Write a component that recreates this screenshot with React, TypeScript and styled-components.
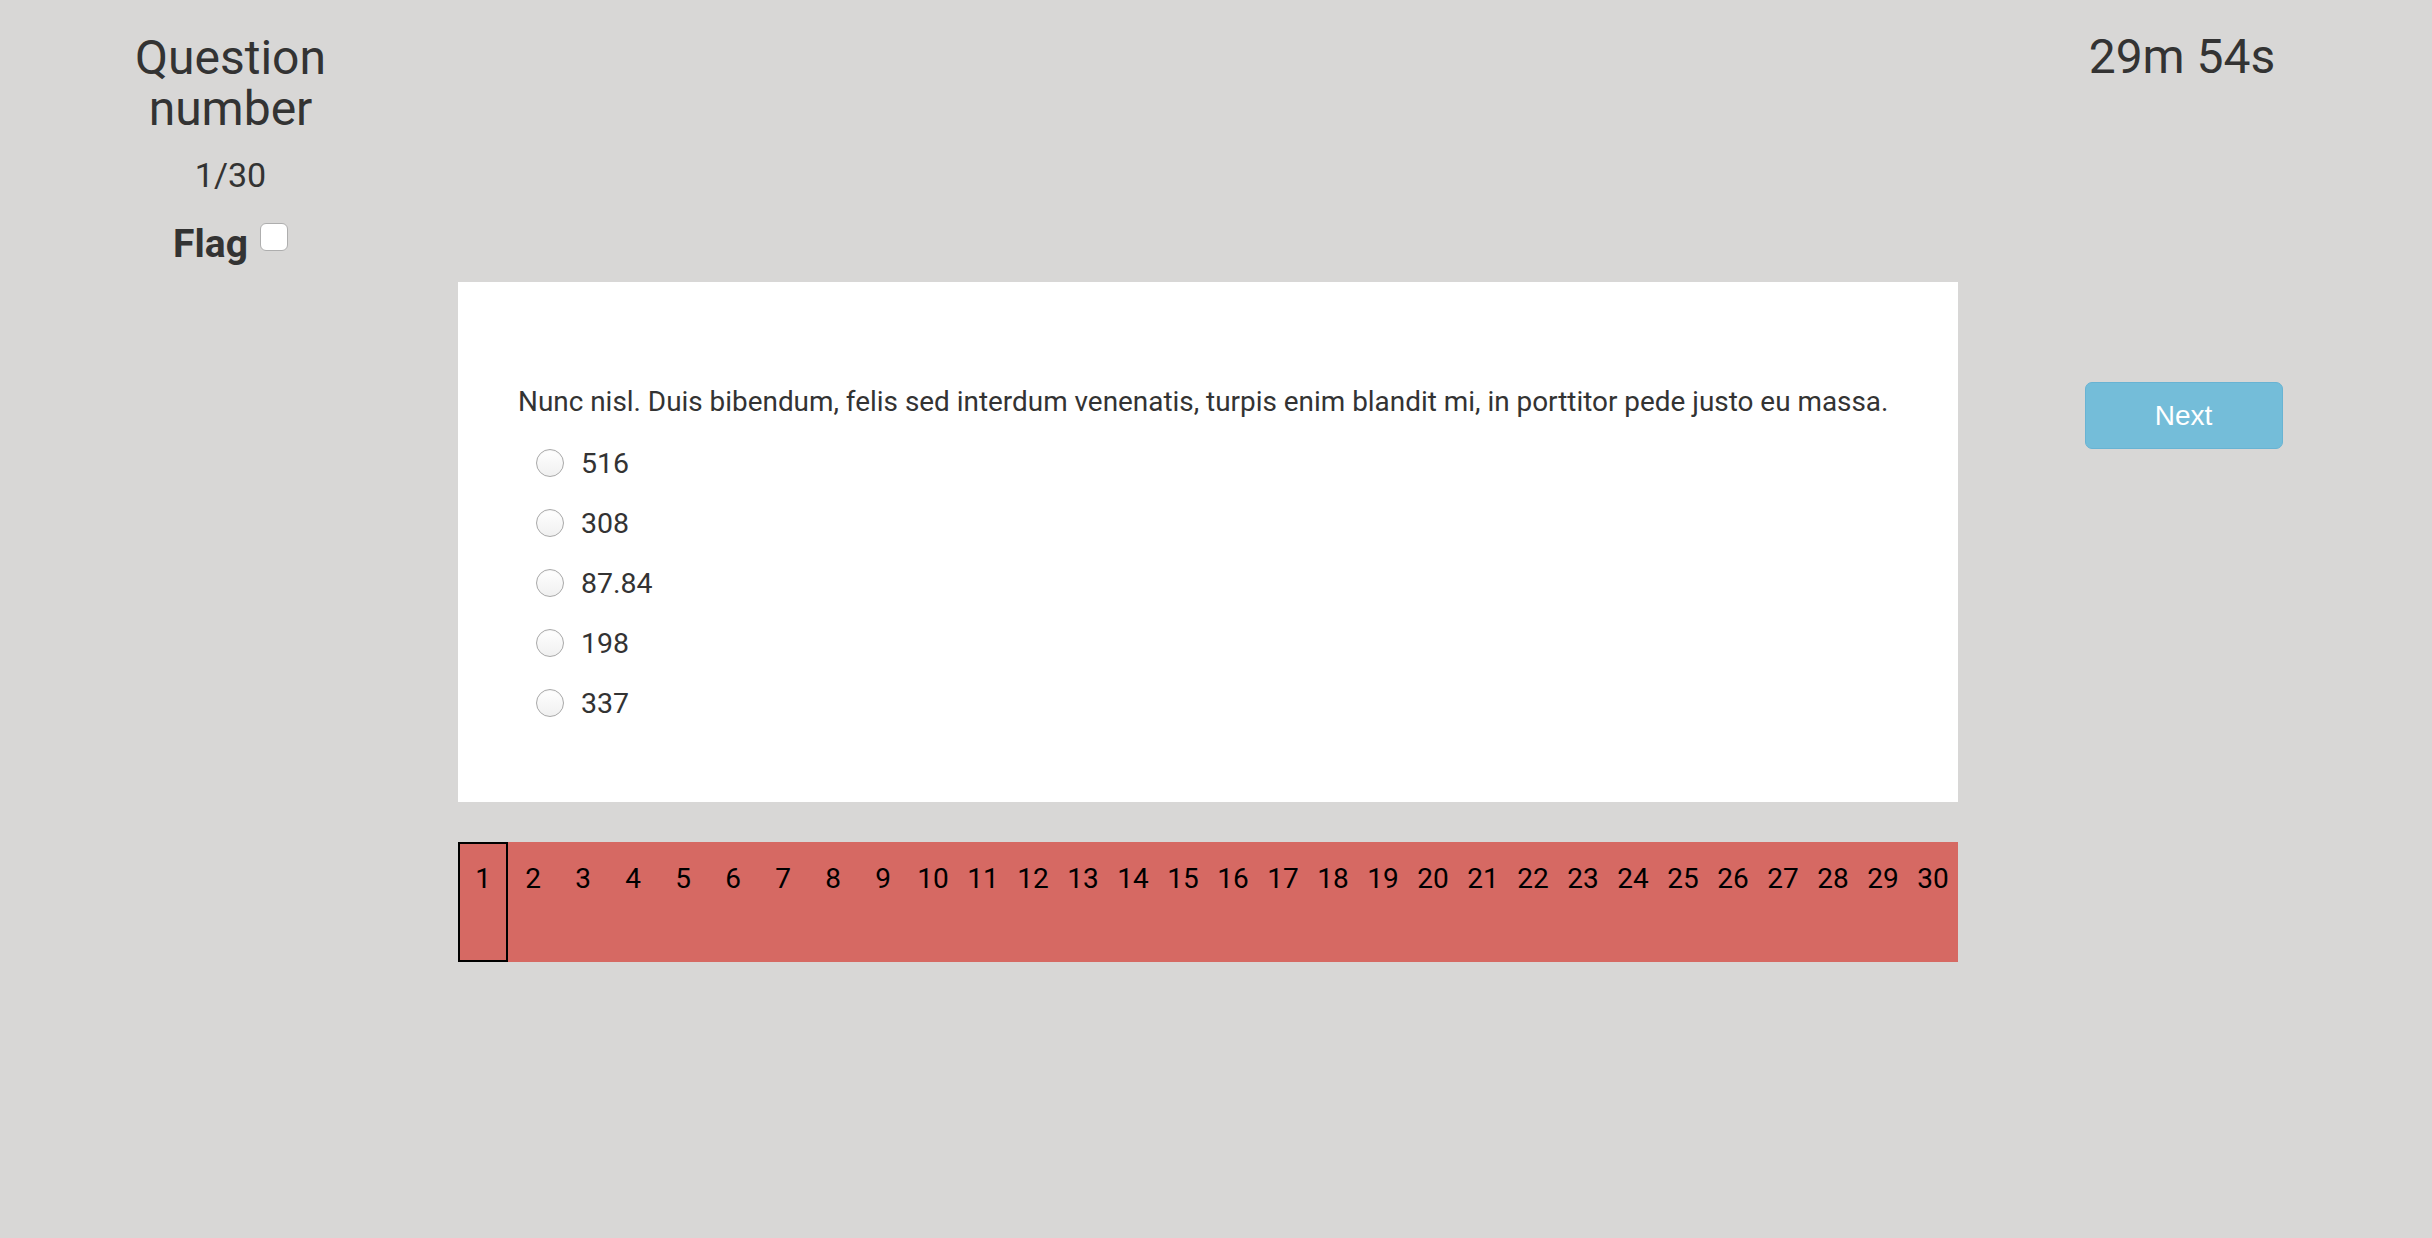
import React from "react";
import styled, { createGlobalStyle } from "styled-components";

const GlobalStyle = createGlobalStyle`
  html, body {
    margin: 0;
    padding: 0;
    background: #d8d7d6;
    font-family: Roboto, "Liberation Sans", sans-serif;
    color: #333333;
  }
  * { box-sizing: border-box; }
`;

const Page = styled.div`
  display: grid;
  grid-template-columns: 458px 1500px 448px;
  grid-template-rows: 282px auto auto;
  align-content: start;
  min-height: 1238px;
`;

const InfoColumn = styled.div`
  grid-column: 1;
  grid-row: 1;
  display: flex;
  flex-direction: column;
  align-items: center;
  padding: 32px 0 0 3px;
`;

const Title = styled.h3`
  margin: 0;
  font-size: 48px;
  line-height: 51px;
  font-weight: 400;
  text-align: center;
  width: 220px;
`;

const Counter = styled.div`
  margin-top: 21px;
  font-size: 34px;
  line-height: 40px;
`;

const FlagRow = styled.label`
  margin-top: 26px;
  display: flex;
  align-items: flex-start;
  gap: 12px;
  font-size: 39px;
  line-height: 46px;
  font-weight: 700;
`;

const CheckBox = styled.span`
  margin-top: 2px;
  width: 28px;
  height: 28px;
  border-radius: 6px;
  background: #ffffff;
  border: 1px solid #aeaeae;
`;

const TimerColumn = styled.div`
  grid-column: 3;
  grid-row: 1;
  display: flex;
  justify-content: center;
  padding-top: 29px;
  font-size: 48px;
  line-height: 56px;
`;

const Card = styled.div`
  grid-column: 2;
  grid-row: 2;
  background: #ffffff;
  height: 520px;
  padding: 103px 60px 0 60px;
`;

const QuestionText = styled.p`
  margin: 0;
  font-size: 27.9px;
  line-height: 34px;
  color: #333333;
`;

const Options = styled.div`
  margin-top: 14px;
  display: flex;
  flex-direction: column;
`;

const OptionRow = styled.label`
  display: flex;
  align-items: center;
  height: 60px;
  gap: 17px;
  padding-left: 18px;
  font-size: 28.5px;
  color: #333333;
`;

const Radio = styled.span`
  width: 28px;
  height: 28px;
  border-radius: 50%;
  border: 1px solid #a9a9a9;
  background: linear-gradient(#ffffff, #f0f0f0);
  box-shadow: inset 0 1px 1px rgba(0, 0, 0, 0.04);
`;

const SideColumn = styled.div`
  grid-column: 3;
  grid-row: 2;
  display: flex;
  justify-content: center;
  align-items: flex-start;
  padding: 100px 0 0 3px;
`;

const NextButton = styled.button`
  width: 198px;
  height: 67px;
  border-radius: 7px;
  border: 1px solid #68b3d3;
  background: #74bdd9;
  color: #ffffff;
  font-family: "Liberation Sans", Arial, sans-serif;
  font-size: 28px;
  cursor: pointer;
`;

const NavBar = styled.div`
  grid-column: 2;
  grid-row: 3;
  margin-top: 40px;
  height: 120px;
  background: #d66963;
  display: flex;
`;

const NavItem = styled.div<{ $active?: boolean }>`
  width: 50px;
  height: 120px;
  border: 2px solid ${(p) => (p.$active ? "#000000" : "transparent")};
  padding-top: 18px;
  text-align: center;
  font-size: 28px;
  line-height: 33px;
  color: #000000;
`;

const options = ["516", "308", "87.84", "198", "337"];
const items = Array.from({ length: 30 }, (_, i) => i + 1);

export default function App() {
  return (
    <>
      <GlobalStyle />
      <Page>
        <InfoColumn>
          <Title>Question number</Title>
          <Counter>1/30</Counter>
          <FlagRow>
            Flag
            <CheckBox />
          </FlagRow>
        </InfoColumn>
        <TimerColumn>29m 54s</TimerColumn>
        <Card>
          <QuestionText>
            Nunc nisl. Duis bibendum, felis sed interdum venenatis, turpis enim blandit mi, in porttitor pede justo eu massa.
          </QuestionText>
          <Options>
            {options.map((o) => (
              <OptionRow key={o}>
                <Radio />
                {o}
              </OptionRow>
            ))}
          </Options>
        </Card>
        <SideColumn>
          <NextButton>Next</NextButton>
        </SideColumn>
        <NavBar>
          {items.map((n) => (
            <NavItem key={n} $active={n === 1}>
              {n}
            </NavItem>
          ))}
        </NavBar>
      </Page>
    </>
  );
}
